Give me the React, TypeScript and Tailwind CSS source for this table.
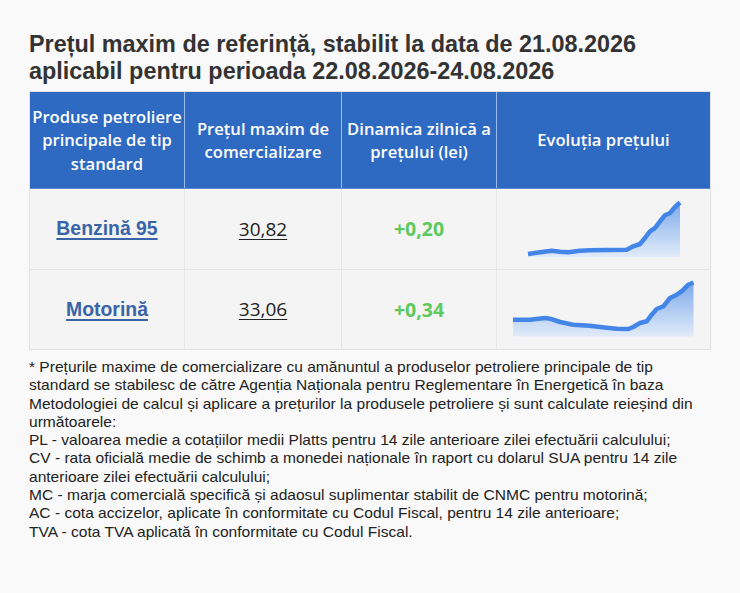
const rows = [
  {
    name: 'Benzină 95',
    price: '30,82',
    delta: '+0,20',
    w: 156,
    h: 59,
    bottom: 57,
    points: [
      [2, 54], [14, 52.3], [25.7, 50.7], [34, 51.7], [42.3, 52.3], [54, 50.7], [64, 50.3],
      [80.7, 50], [100.7, 49.7], [107.3, 46.3], [114, 44], [119, 38], [124, 31.3], [129, 28],
      [134, 21.3], [139, 15.3], [144, 13], [149, 7], [154, 2.5],
    ],
  },
  {
    name: 'Motorină',
    price: '33,06',
    delta: '+0,34',
    w: 182,
    h: 57,
    bottom: 55.5,
    points: [
      [0, 38.7], [17, 38.7], [32, 37], [37, 37.7], [47, 41], [60.3, 43.7], [77, 44.7],
      [93.7, 46.7], [103.7, 47.7], [115.3, 48], [120.3, 46], [127, 42], [133.7, 40.3],
      [138.7, 33.7], [143.7, 28], [150.3, 25.3], [157, 17], [163.7, 13.7], [168.7, 10.3],
      [175.3, 3.7], [180.5, 1.5],
    ],
  },
];

// footnote lines, broken as in the source page
const notes = [
  '* Prețurile maxime de comercializare cu amănuntul a produselor petroliere principale de tip',
  'standard se stabilesc de către Agenția Naționala pentru Reglementare în Energetică în baza',
  'Metodologiei de calcul și aplicare a prețurilor la produsele petroliere și sunt calculate reieșind din',
  'următoarele:',
  'PL - valoarea medie a cotațiilor medii Platts pentru 14 zile anterioare zilei efectuării calculului;',
  'CV - rata oficială medie de schimb a monedei naționale în raport cu dolarul SUA pentru 14 zile',
  'anterioare zilei efectuării calculului;',
  'MC - marja comercială specifică și adaosul suplimentar stabilit de CNMC pentru motorină;',
  'AC - cota accizelor, aplicate în conformitate cu Codul Fiscal, pentru 14 zile anterioare;',
  'TVA - cota TVA aplicată în conformitate cu Codul Fiscal.',
];

function Spark({ w, h, bottom, points, id }: { w: number; h: number; bottom: number; points: number[][]; id: string }) {
  const line = points.map((p, i) => `${i ? 'L' : 'M'}${p[0]},${p[1]}`).join(' ');
  const first = points[0];
  const last = points[points.length - 1];
  const area = `${line} L${last[0]},${bottom} L${first[0]},${bottom} Z`;
  return (
    <svg width={w} height={h} viewBox={`0 0 ${w} ${h}`} className="block overflow-visible">
      <defs>
        <linearGradient id={id} x1="0" y1="0" x2="0" y2="1">
          <stop offset="0%" stopColor="#7eaaea" />
          <stop offset="100%" stopColor="#e1ebf9" />
        </linearGradient>
      </defs>
      <path d={area} fill={`url(#${id})`} />
      <path d={line} fill="none" stroke="#4386e8" strokeWidth={4.5} strokeLinejoin="round" strokeLinecap="butt" />
    </svg>
  );
}

export default function App() {
  return (
    <div className="min-h-[593px] w-full bg-[#f9f9f9] pl-[29px] pr-[29px] pt-[31px] font-['Liberation_Sans',Arial,sans-serif] text-[#222]">
      <h1 className="text-[23.4px] font-bold leading-[27px] text-[#333]">
        Prețul maxim de referință, stabilit la data de 21.08.2026
        <br />
        aplicabil pentru perioada 22.08.2026-24.08.2026
      </h1>

      <div className="mt-[6px] w-[682px] border border-[#e3e3e3]">
        <div className="grid grid-cols-[155px_157px_155px_1fr] border-b border-[#5b8bd3] bg-[#2e69c2] font-['Open_Sans',sans-serif] text-[16.6px] font-semibold leading-[23.5px] text-white">
          <div className="flex h-[96px] items-center justify-center border-r border-[#9bbcea] text-center">
            Produse petroliere principale de tip standard
          </div>
          <div className="flex items-center justify-center border-r border-[#9bbcea] text-center">
            Prețul maxim de comercializare
          </div>
          <div className="flex items-center justify-center border-r border-[#9bbcea] text-center">
            Dinamica zilnică a prețului (lei)
          </div>
          <div className="flex items-center justify-center text-center">Evoluția prețului</div>
        </div>

        {rows.map((r, i) => (
          <div
            key={r.name}
            className={`grid h-[80px] grid-cols-[155px_157px_155px_1fr] bg-[#f4f4f4] ${i ? 'border-t border-[#e6e6e6]' : ''}`}
          >
            <div className="flex items-center justify-center border-r border-[#e6e6e6]">
              <a
                href="#"
                className="text-[19.4px] font-bold text-[#3a64a8] underline decoration-2 underline-offset-[3px]"
              >
                {r.name}
              </a>
            </div>
            <div className="flex items-center justify-center border-r border-[#e6e6e6]">
              <span className="font-['Open_Sans',sans-serif] text-[19px] text-[#222] underline underline-offset-[3px]">
                {r.price}
              </span>
            </div>
            <div className="flex items-center justify-center border-r border-[#e6e6e6]">
              <span className="font-['Open_Sans',sans-serif] text-[19.5px] font-bold text-[#5ec95e]">{r.delta}</span>
            </div>
            <div className="flex items-center justify-center">
              <Spark id={`g${i}`} w={r.w} h={r.h} bottom={r.bottom} points={r.points} />
            </div>
          </div>
        ))}
      </div>

      <div className="mt-[8px] w-[682px] text-[15.55px] leading-[18.3px]">
        {notes.map((n) => (
          <div key={n} className="whitespace-nowrap">
            {n}
          </div>
        ))}
      </div>
    </div>
  );
}
